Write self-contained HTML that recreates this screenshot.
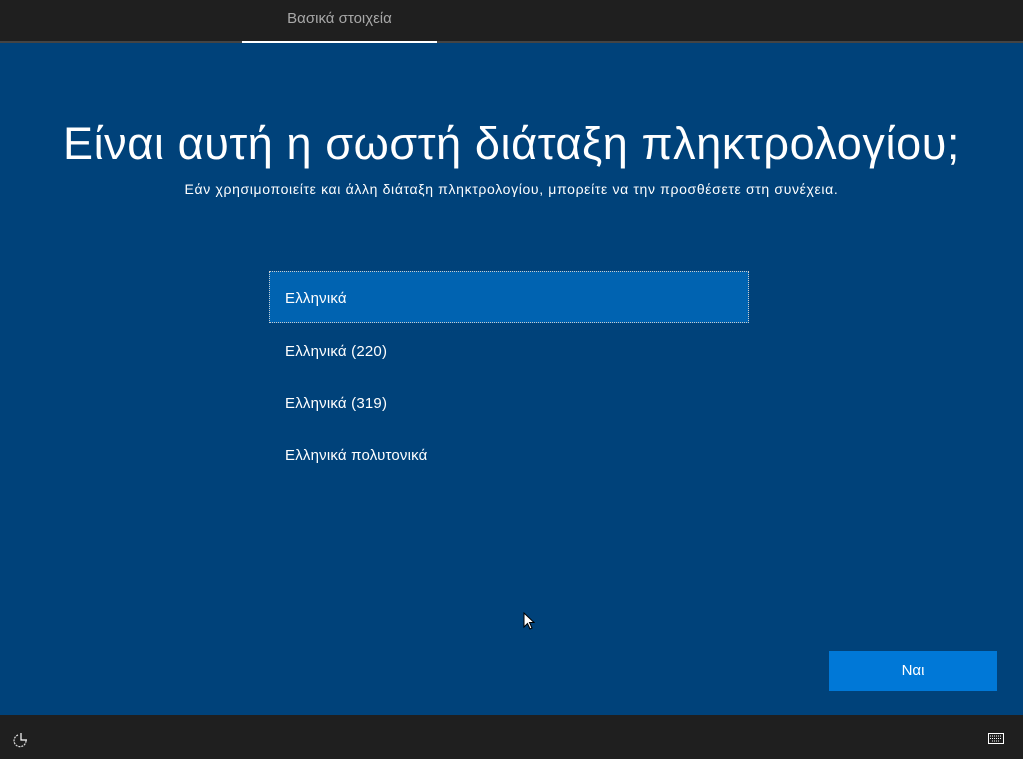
<!DOCTYPE html>
<html><head><meta charset="utf-8"><style>
body{margin:0;width:1023px;height:759px;overflow:hidden;background:#00427a;font-family:"Segoe UI","Liberation Sans","DejaVu Sans",sans-serif;color:#fff;position:relative}
.top{position:absolute;left:0;top:0;width:1023px;height:41px;background:#1f1f1f}
.top .line{position:absolute;left:0;top:41px;width:1023px;height:2px;background:#444}
.top .ul{position:absolute;left:242px;top:41px;width:195px;height:2px;background:#fff}
.top .t{position:absolute;left:242px;width:195px;top:10px;text-align:center;font-size:15px;color:#a8a8a8}
h1{position:absolute;top:118px;left:0;width:1023px;text-align:center;margin:0;font-weight:300;font-size:45px;letter-spacing:0.6px}
.sub{position:absolute;top:181px;left:0;width:1023px;text-align:center;font-size:14px;letter-spacing:0.65px}
.item{position:absolute;left:269px;width:480px;height:52px;line-height:57px;padding-left:16px;box-sizing:border-box;font-size:15px;letter-spacing:0.2px}
.sel{background:#0063b1;border:1px dotted #ccc;line-height:54px;padding-left:15px}
.btn{position:absolute;left:829px;top:651px;width:168px;height:40px;background:#0078d7;text-align:center;line-height:40px;font-size:15px}
.bot{position:absolute;left:0;top:715px;width:1023px;height:44px;background:#1f1f1f}
</style></head><body>
<div class="top"><div class="line"></div><div class="ul"></div><div class="t">Βασικά στοιχεία</div></div>
<h1>Είναι αυτή η σωστή διάταξη πληκτρολογίου;</h1>
<div class="sub">Εάν χρησιμοποιείτε και άλλη διάταξη πληκτρολογίου, μπορείτε να την προσθέσετε στη συνέχεια.</div>
<div class="item sel" style="top:271px">Ελληνικά</div>
<div class="item" style="top:323px">Ελληνικά (220)</div>
<div class="item" style="top:375px">Ελληνικά (319)</div>
<div class="item" style="top:427px">Ελληνικά πολυτονικά</div>
<svg style="position:absolute;left:523px;top:612px" width="12" height="19" viewBox="0 0 12 19"><path d="M1 1 L1 15 L4.5 11.5 L7 17 L9 16 L6.5 10.5 L11 10.5 Z" fill="#fff" stroke="#000" stroke-width="1"/></svg>
<div class="btn">Ναι</div>
<div class="bot">
<svg style="position:absolute;left:12px;top:17px" width="18" height="16" viewBox="0 0 18 16"><path d="M6 3 A6 6 0 1 0 14 8" fill="none" stroke="#ddd" stroke-width="1.2" stroke-dasharray="2 1"/><path d="M9 1 V8 H15" fill="none" stroke="#fff" stroke-width="1.2"/></svg>
<svg style="position:absolute;left:988px;top:18px" width="16" height="11" viewBox="0 0 16 11"><rect x="0.5" y="0.5" width="15" height="10" fill="none" stroke="#fff"/><path d="M2 3h12M2 5.5h12M4 8h8" stroke="#fff" stroke-dasharray="1 1"/></svg>
</div>
</body></html>
